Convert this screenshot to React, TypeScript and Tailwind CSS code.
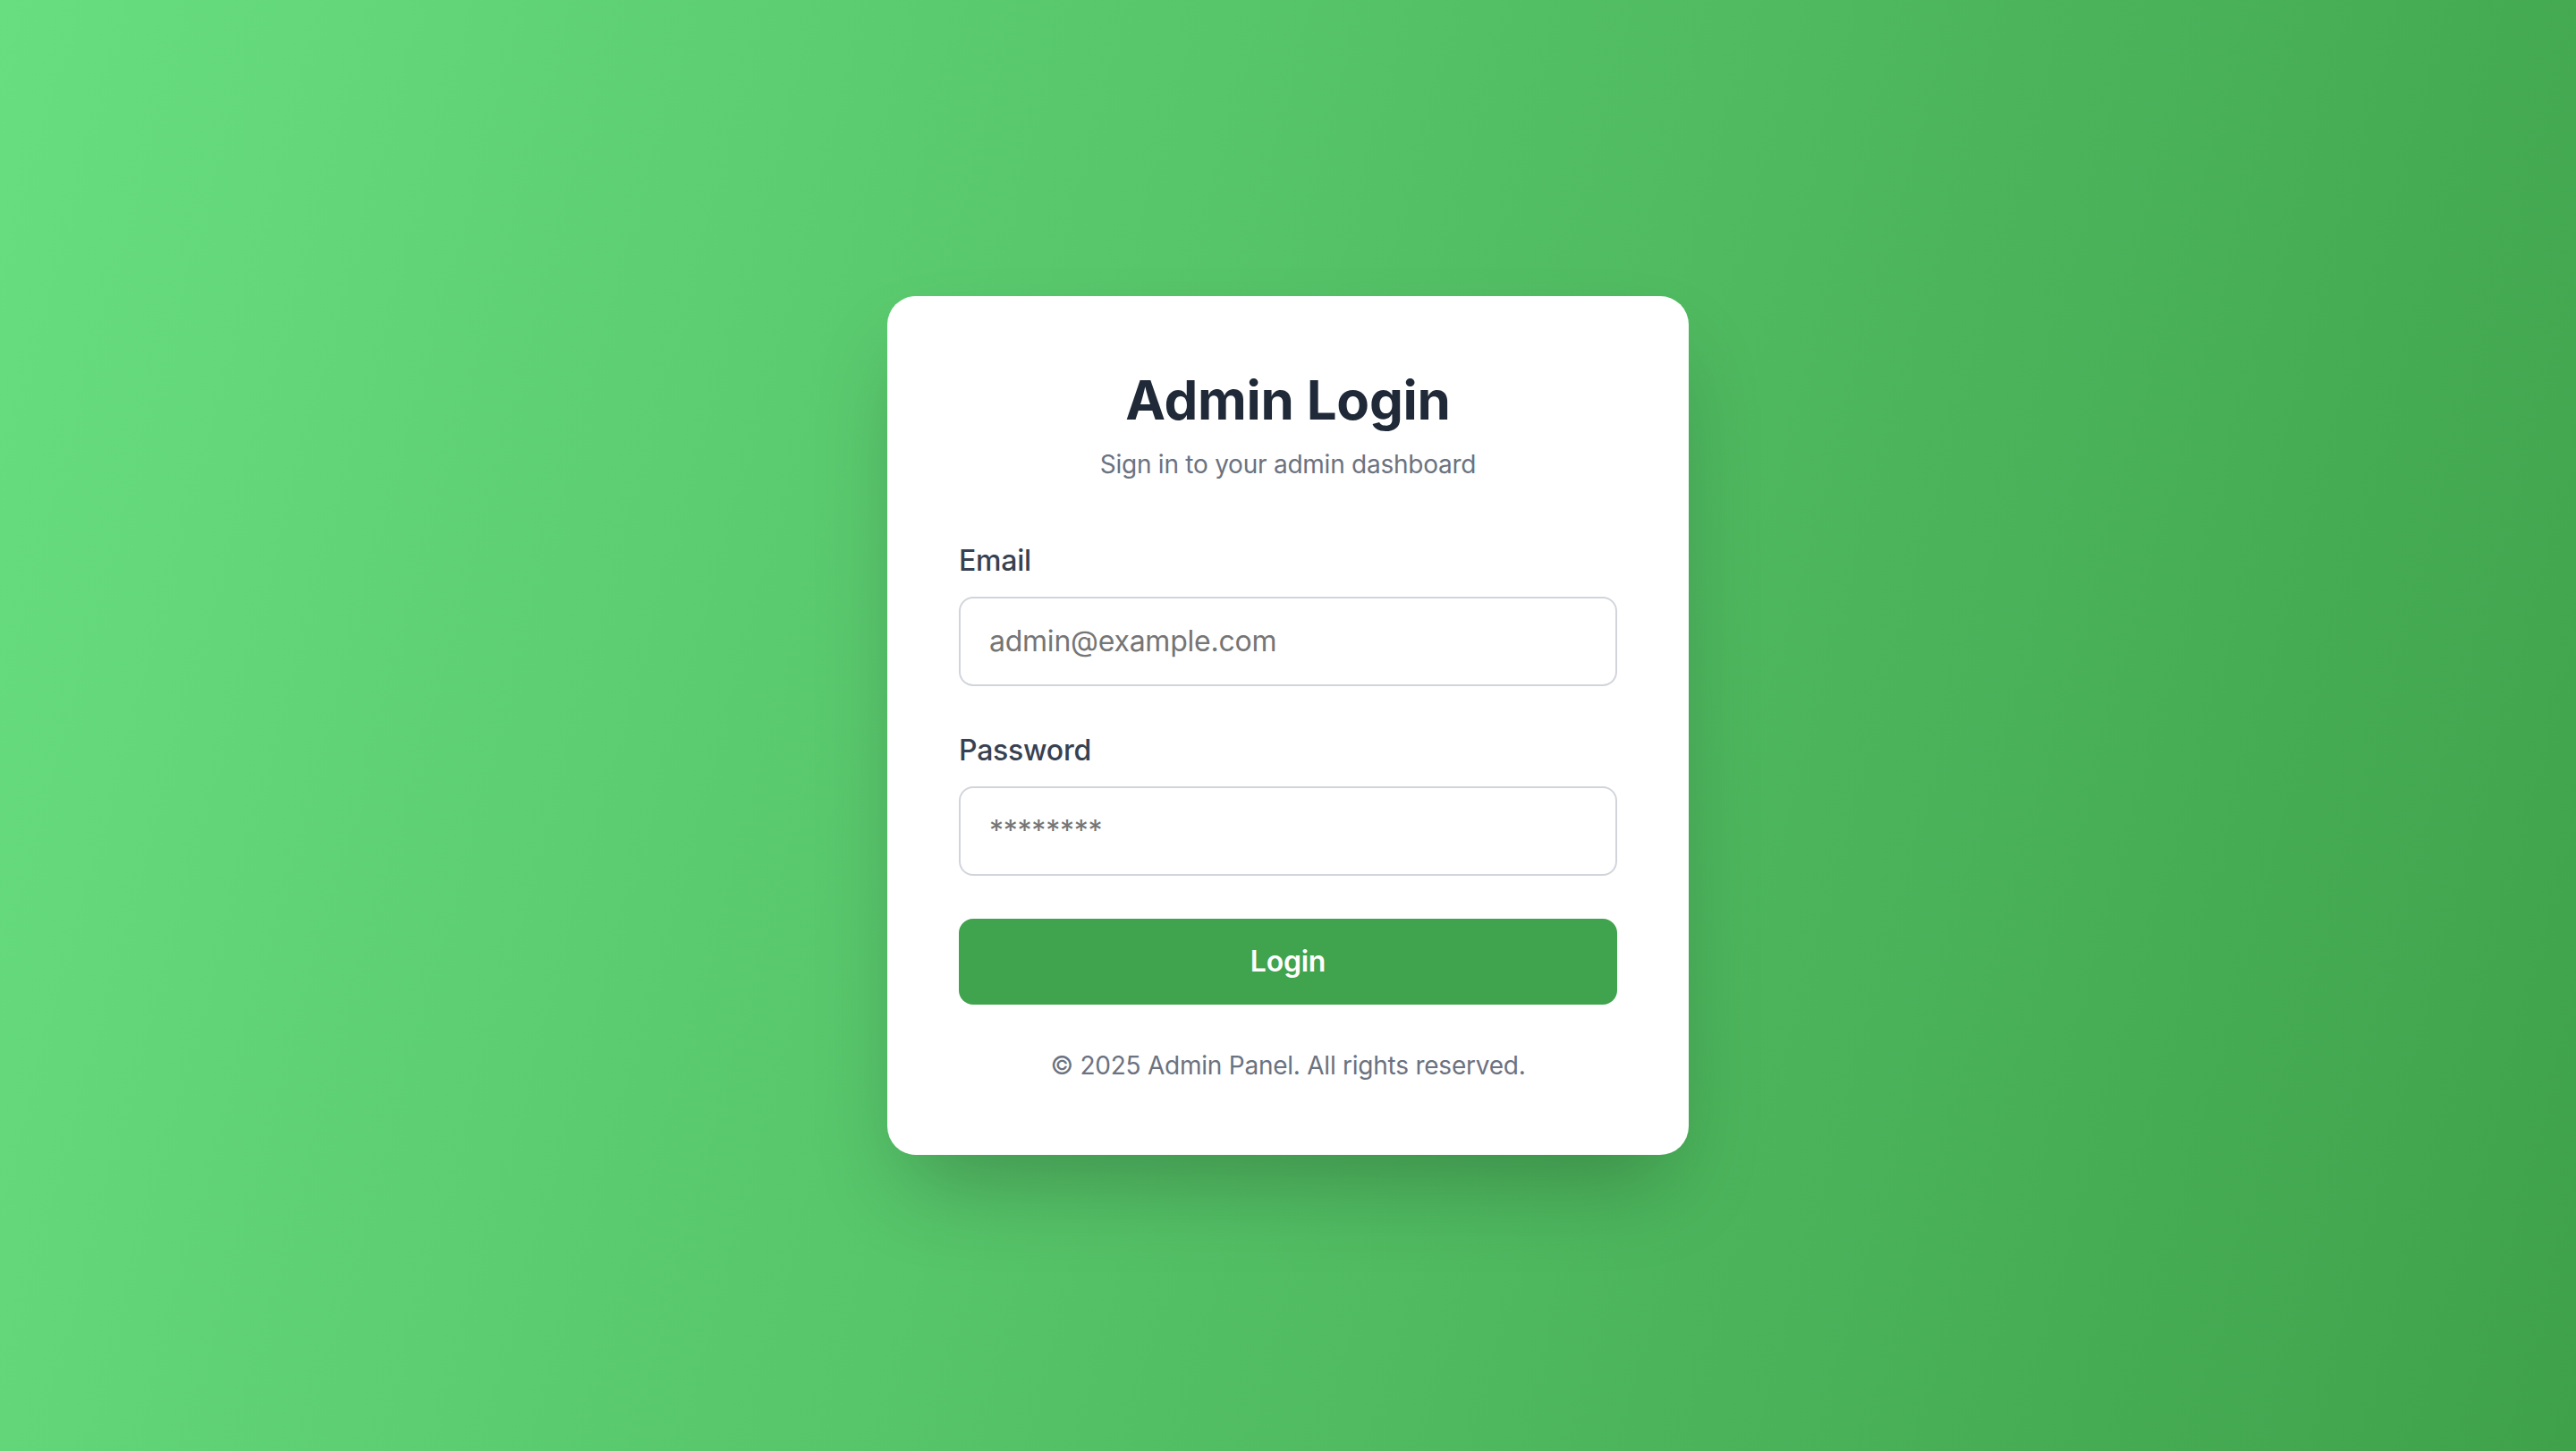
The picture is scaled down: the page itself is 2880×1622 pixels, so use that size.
export default function App() {
  return (
    <div className="flex min-h-screen items-center justify-center bg-[linear-gradient(105deg,#68de80,#3fa24b)] font-['Inter','Noto_Sans',sans-serif] tracking-[-0.015em]">
      <div className="w-[896px] rounded-[32px] bg-white p-[80px] shadow-[0_50px_100px_-24px_rgba(0,0,0,0.25)]">
        {/* Header */}
        <div className="mb-[64px] text-center">
          <h1 className="text-[60px] leading-[72px] font-bold text-[#1f2937]">
            Admin Login
          </h1>
          <p className="mt-[16px] text-[28px] leading-[40px] text-[#6b7280]">
            Sign in to your admin dashboard
          </p>
        </div>

        <form className="flex flex-col gap-[48px]" onSubmit={(e) => e.preventDefault()}>
          <div>
            <label className="mb-[16px] block text-[32px] leading-[48px] font-medium text-[#374151]">
              Email
            </label>
            <input
              type="email"
              placeholder="admin@example.com"
              className="block w-full rounded-[16px] border-2 border-[#d1d5db] px-[32px] py-[24px] text-[32px] leading-[48px] text-[#111827] outline-none placeholder:text-[#757575]"
            />
          </div>

          <div>
            <label className="mb-[16px] block text-[32px] leading-[48px] font-medium text-[#374151]">
              Password
            </label>
            <input
              type="password"
              placeholder="********"
              className="block w-full rounded-[16px] border-2 border-[#d1d5db] px-[32px] py-[24px] text-[32px] leading-[48px] text-[#111827] outline-none placeholder:text-[#757575]"
            />
          </div>

          <button
            type="submit"
            className="w-full rounded-[16px] bg-[#40a34d] py-[24px] text-[32px] leading-[48px] font-semibold text-white"
          >
            Login
          </button>
        </form>

        <p className="mt-[48px] text-center text-[28px] leading-[40px] text-[#6b7280]">
          © 2025 Admin Panel. All rights reserved.
        </p>
      </div>
    </div>
  );
}
